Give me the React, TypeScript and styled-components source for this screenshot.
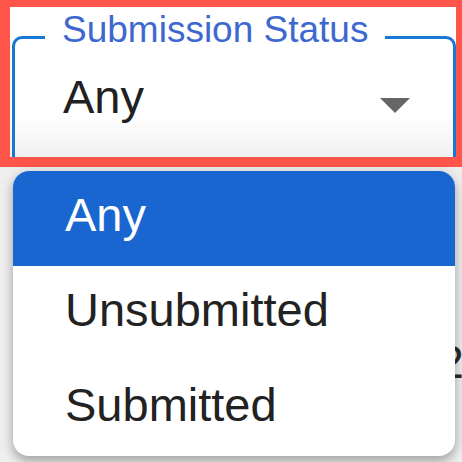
import React, {ReactElement} from "react";
import styled, {createGlobalStyle} from "styled-components";

const GlobalStyle = createGlobalStyle`
  html, body {
    margin: 0;
    padding: 0;
    background: #efefef;
  }

  body {
    font-family: "Liberation Sans", Arial, sans-serif;
  }
`;

const StyledPage = styled.div`
  position: relative;
  width: 462px;
  height: 462px;
  overflow: hidden;
  background: #efefef;
  display: flex;
  flex-direction: column;
`;

// red annotation box drawn around the select
const StyledHighlight = styled.div`
  box-sizing: border-box;
  height: 167px;
  flex-shrink: 0;
  border-style: solid;
  border-color: #ff554a;
  border-width: 7px 6px 10px 10px;
  overflow: hidden;
  background: linear-gradient(to bottom, #ffffff 72%, #f1f1f1 100%);
`;

const StyledField = styled.fieldset`
  box-sizing: border-box;
  min-width: 0;
  height: 170px;
  margin: 4px 0 0 2px;
  padding: 0 0 0 30px;
  border: 3px solid #1976d2;
  border-radius: 10px;
`;

const StyledLabel = styled.legend`
  padding: 0 17px 14px;
  font-size: 37px;
  line-height: 38px;
  color: #3d68d0;
`;

const StyledValueRow = styled.div`
  display: flex;
  align-items: flex-start;
  justify-content: space-between;
  padding: 6px 43px 0 18px;
`;

const StyledValue = styled.span`
  font-size: 47px;
  line-height: 56px;
  color: #212121;
`;

const StyledArrow = styled.svg`
  width: 30px;
  height: 15px;
  margin-top: 29px;
  fill: #666666;
`;

// page content hidden behind the open menu
const StyledBehindRow = styled.div`
  display: flex;
  justify-content: flex-end;
  margin: 171px -2px 0 0;
  font-size: 47px;
  line-height: 47px;
  color: #2a2a2a;
`;

const StyledMenu = styled.ul`
  position: absolute;
  top: 171px;
  left: 13px;
  z-index: 2;
  width: 442px;
  margin: 0;
  padding: 0;
  list-style: none;
  background: #ffffff;
  border-radius: 16px;
  overflow: hidden;
  box-shadow: 0 6px 10px rgba(0, 0, 0, 0.22), 0 2px 16px rgba(0, 0, 0, 0.14);
`;

const StyledItem = styled.li<{ $selected?: boolean }>`
  box-sizing: border-box;
  height: 95px;
  padding: 0 0 0 52px;
  font-size: 47px;
  line-height: 87px;
  color: ${({$selected}) => ($selected ? "#ffffff" : "#222222")};
  background: ${({$selected}) => ($selected ? "#1a66d0" : "transparent")};
`;

const options = ["Any", "Unsubmitted", "Submitted"];

export default function App(): ReactElement {
    const selected = "Any";

    return (
        <StyledPage>
            <GlobalStyle/>
            <StyledHighlight>
                <StyledField>
                    <StyledLabel>Submission Status</StyledLabel>
                    <StyledValueRow>
                        <StyledValue>{selected}</StyledValue>
                        <StyledArrow viewBox="0 0 10 5">
                            <path d="M0 0l5 5 5-5z"/>
                        </StyledArrow>
                    </StyledValueRow>
                </StyledField>
            </StyledHighlight>
            <StyledBehindRow>2</StyledBehindRow>
            <StyledMenu>
                {options.map((option) => (
                    <StyledItem key={option} $selected={option === selected}>
                        {option}
                    </StyledItem>
                ))}
            </StyledMenu>
        </StyledPage>
    );
}
